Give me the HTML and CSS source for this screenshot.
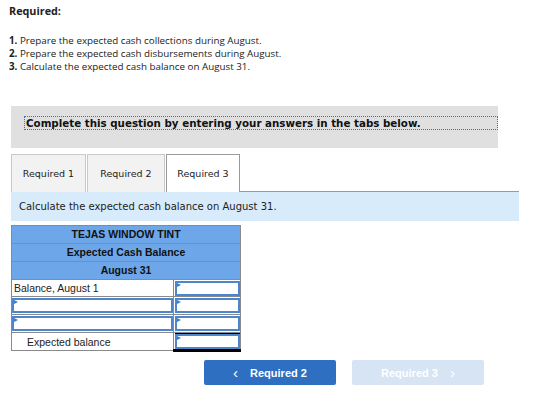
FILE: index.html
```html
<!DOCTYPE html>
<html>
<head>
<meta charset="utf-8">
<link rel="stylesheet" href="styles.css">
</head>
<body>
<div class="page">
  <div class="req-title">Required:</div>
  <div class="steps">
    <div class="step"><b>1.</b> Prepare the expected cash collections during August.</div>
    <div class="step"><b>2.</b> Prepare the expected cash disbursements during August.</div>
    <div class="step"><b>3.</b> Calculate the expected cash balance on August 31.</div>
  </div>

  <div class="complete-box">
    <div class="complete-text">Complete this question by entering your answers in the tabs below.</div>
  </div>

  <div class="tabs">
    <div class="tab">Required 1</div>
    <div class="tab">Required 2</div>
    <div class="tab active">Required 3</div>
    <div class="tab-fill"></div>
  </div>
  <div class="instr">Calculate the expected cash balance on August 31.</div>

  <table class="sheet">
    <colgroup>
      <col class="c1">
      <col class="c2">
    </colgroup>
    <tr class="hd"><td colspan="2">TEJAS WINDOW TINT</td></tr>
    <tr class="hd"><td colspan="2">Expected Cash Balance</td></tr>
    <tr class="hd"><td colspan="2">August 31</td></tr>
    <tr>
      <td class="lbl">Balance, August 1</td>
      <td class="val"><div class="inp"></div></td>
    </tr>
    <tr>
      <td class="lbl cellin"><div class="inp"></div></td>
      <td class="val"><div class="inp"></div></td>
    </tr>
    <tr>
      <td class="lbl cellin"><div class="inp"></div></td>
      <td class="val"><div class="inp"></div></td>
    </tr>
    <tr>
      <td class="lbl indent">Expected balance</td>
      <td class="val total"><div class="inp"></div></td>
    </tr>
  </table>

  <div class="nav">
    <div class="btn prev"><span class="chev">&lsaquo;</span>Required 2</div>
    <div class="btn next">Required 3<span class="chev">&rsaquo;</span></div>
  </div>
</div>
</body>
</html>
```
FILE: styles.css
```css
html, body {
  margin: 0;
  padding: 0;
  background: #ffffff;
}
.page {
  width: 544px;
  height: 413px;
  font-family: "Open Sans", "Lato", sans-serif;
  color: #222;
}
.req-title {
  padding: 4px 0 0 9px;
  font-size: 10.8px;
  font-weight: bold;
  line-height: 14px;
}
.steps {
  padding: 16px 0 0 9px;
  font-size: 9.8px;
  line-height: 13px;
}
.step b {
  font-weight: bold;
}
.complete-box {
  margin: 33px 0 0 11px;
  width: 487px;
  height: 42px;
  background: #e0e0e0;
  box-sizing: border-box;
  padding: 10px 0 0 13px;
}
.complete-text {
  font-family: "DejaVu Sans", Verdana, sans-serif;
  font-weight: bold;
  font-size: 10.3px;
  line-height: 12px;
  color: #111;
  border: 1px dotted #3a70c8;
  padding: 0 0 0 1px;
  white-space: nowrap;
}
.tabs {
  display: flex;
  margin: 6px 0 0 11px;
  width: 508px;
  height: 38px;
  font-family: "DejaVu Sans", Verdana, sans-serif;
  font-size: 9.5px;
  color: #222;
}
.tab {
  box-sizing: border-box;
  height: 38px;
  width: 75px;
  margin-right: 1px;
  background: #f2f2f2;
  border: 1px solid #c9c9c9;
  border-bottom: none;
  display: flex;
  align-items: center;
  justify-content: center;
}
.tab:nth-child(2) { width: 78px; }
.tab.active {
  width: 74px;
  background: #fff;
  border-color: #9a9a9a;
}
.tab-fill {
  flex: 1;
  border-bottom: 1px solid #9a9a9a;
  box-sizing: border-box;
  margin-left: -1px;
}
.instr {
  margin-left: 11px;
  width: 508px;
  height: 29px;
  box-sizing: border-box;
  background: #d8ebfa;
  font-family: "DejaVu Sans", Verdana, sans-serif;
  font-size: 10px;
  line-height: 29px;
  padding-left: 8px;
  color: #222;
}
.sheet {
  margin: 4px 0 0 11px;
  border-collapse: collapse;
  width: 229px;
  font-family: "Liberation Sans", Arial, sans-serif;
  font-size: 10.5px;
  color: #222;
  table-layout: fixed;
  border: 1px solid #8a8a8a;
}
.sheet col.c1 { width: 162px; }
.sheet col.c2 { width: 67px; }
.sheet td {
  padding: 0;
  border: 1px solid #8a8a8a;
}
.sheet tr.hd td {
  background: #6da7e9;
  text-align: center;
  font-weight: bold;
  height: 17px;
  line-height: 17px;
  color: #111;
}
.sheet td.lbl {
  height: 16px;
  padding-left: 2px;
  line-height: 16px;
  vertical-align: middle;
}
.sheet td.lbl.cellin {
  padding: 1px 0 0 0;
  vertical-align: top;
}
.sheet td.indent {
  padding-left: 15px;
}
.sheet td.val {
  padding: 1px 0 0 1px;
  vertical-align: top;
}
.inp {
  position: relative;
  height: 11px;
  border: 2px solid #4d86cc;
  background: #fff;
}
.inp::before {
  content: "";
  position: absolute;
  left: 0;
  top: 0;
  border-left: 4px solid #3c7bd2;
  border-top: 2px solid transparent;
  border-bottom: 2px solid transparent;
}
.sheet td.total {
  border-bottom: 3px solid #000;
}
.total .inp {
  box-shadow: 0 -1px 0 #000;
}
.nav {
  display: flex;
  gap: 16px;
  margin: 8px 0 0 204px;
}
.btn {
  width: 132px;
  height: 25px;
  border-radius: 2px;
  font-family: "Liberation Sans", Arial, sans-serif;
  font-weight: bold;
  font-size: 11px;
  color: #fff;
  display: flex;
  align-items: center;
  justify-content: center;
}
.btn.prev {
  background: #2e6fc1;
}
.btn.next {
  background: #d6e4f4;
}
.chev {
  font-weight: normal;
  font-size: 15px;
  line-height: 14px;
}
.prev .chev { margin-right: 12px; }
.next .chev { margin-left: 12px; }
```
